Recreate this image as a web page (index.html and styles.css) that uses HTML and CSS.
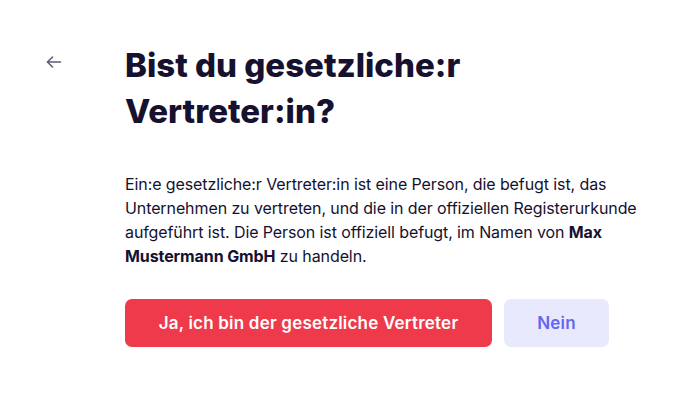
FILE: index.html
```html
<!DOCTYPE html>
<html lang="de">
<head>
<meta charset="utf-8">
<link rel="stylesheet" href="styles.css">
</head>
<body>
<div class="page">
  <button class="back" aria-label="Zurück">
    <svg width="16" height="12" viewBox="0 0 16 12" fill="none" stroke="#5b5872" stroke-width="1.5" stroke-linecap="round" stroke-linejoin="round">
      <path d="M14.5 6H1.5"/>
      <path d="M6.5 1L1.5 6L6.5 11"/>
    </svg>
  </button>
  <main class="content">
    <h1 class="title">Bist du gesetzliche:r Vertreter:in?</h1>
    <p class="text">Ein:e gesetzliche:r Vertreter:in ist eine Person, die befugt ist, das Unternehmen zu vertreten, und die in der offiziellen Registerurkunde aufgeführt ist. Die Person ist offiziell befugt, im Namen von <strong>Max Mustermann GmbH</strong> zu handeln.</p>
    <div class="actions">
      <button class="btn btn-primary">Ja, ich bin der gesetzliche Vertreter</button>
      <button class="btn btn-secondary">Nein</button>
    </div>
  </main>
</div>
</body>
</html>
```
FILE: styles.css
```css
html, body {
  margin: 0;
  padding: 0;
  background: #ffffff;
}
body {
  font-family: "Inter", "Noto Sans", sans-serif;
  color: #15112f;
}
.page {
  display: flex;
  align-items: flex-start;
  padding: 42px 0 0 46px;
}
.back {
  border: 0;
  background: none;
  padding: 0;
  width: 16px;
  height: 12px;
  display: flex;
  margin: 14px 63px 0 0;
  cursor: pointer;
}
.content {
  width: 520px;
}
.title {
  margin: 0;
  font-size: 33px;
  line-height: 46px;
  font-weight: 800;
  width: 360px;
}
.text {
  margin: 38px 0 0;
  font-size: 16px;
  line-height: 24px;
  letter-spacing: -0.1px;
}
.text strong {
  font-weight: 700;
}
.actions {
  display: flex;
  gap: 12px;
  margin-top: 31px;
}
.btn {
  border: 0;
  border-radius: 7px;
  height: 48px;
  font-family: inherit;
  font-size: 17px;
  font-weight: 600;
  letter-spacing: 0.2px;
  cursor: pointer;
}
.btn-primary {
  width: 367px;
  background: #ee3a4b;
  color: #ffffff;
}
.btn-secondary {
  width: 105px;
  background: #e8e9fd;
  color: #6366f1;
}
```
